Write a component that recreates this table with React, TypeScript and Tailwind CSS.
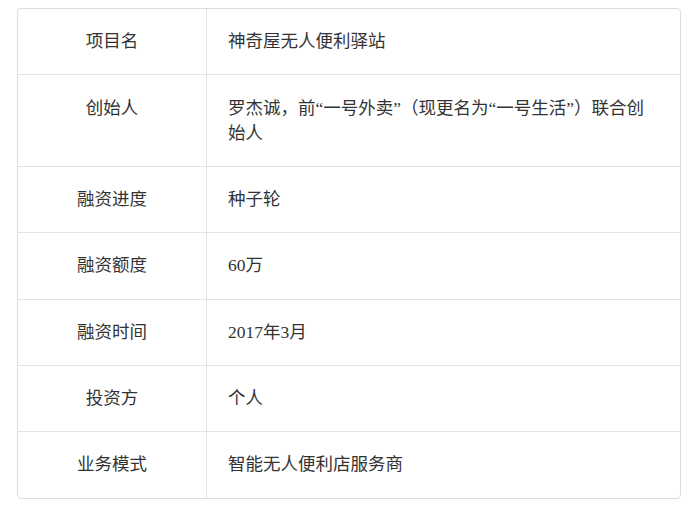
import React from "react";

const rows: [string, string][] = [
  ["项目名", "神奇屋无人便利驿站"],
  ["创始人", "罗杰诚，前“一号外卖”（现更名为“一号生活”）联合创始人"],
  ["融资进度", "种子轮"],
  ["融资额度", "60万"],
  ["融资时间", "2017年3月"],
  ["投资方", "个人"],
  ["业务模式", "智能无人便利店服务商"],
];

export default function App() {
  return (
    <div
      className="w-[692px] h-[519px] bg-white pt-2 pl-[17px]"
      style={{ fontFamily: '"Liberation Serif", "Noto Sans CJK SC", serif' }}
    >
      <div className="w-[664px] border border-[#dcdcdc] rounded-[4px] overflow-hidden text-[17.5px] text-[#333] leading-[25px] [text-spacing-trim:space-all]">
        {rows.map(([k, v], i) => (
          <div
            key={i}
            className={`flex ${i > 0 ? "border-t border-[#e4e4e4]" : ""}`}
          >
            <div className="w-[189px] shrink-0 text-center py-[20.2px] border-r border-[#e4e4e4]">
              {k}
            </div>
            <div className="flex-1 py-[20.2px] pl-[21px] pr-[21px]">{v}</div>
          </div>
        ))}
      </div>
    </div>
  );
}
